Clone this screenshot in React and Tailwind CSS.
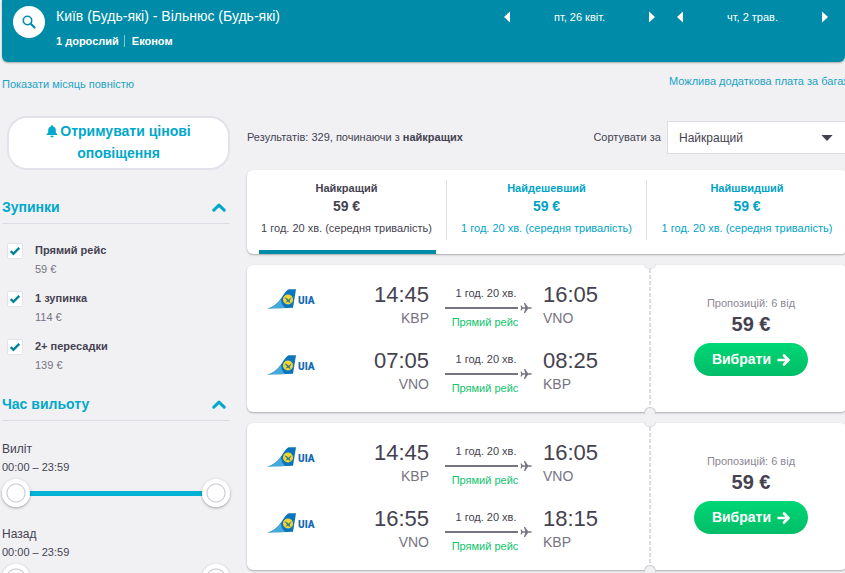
import React from "react";

const tabs = [
  { name: "Найкращий", active: true },
  { name: "Найдешевший", active: false },
  { name: "Найшвидший", active: false },
];

const stops = [
  { id: "direct", label: "Прямий рейс", price: "59 €" },
  { id: "one", label: "1 зупинка", price: "114 €" },
  { id: "two", label: "2+ пересадки", price: "139 €" },
];

const flights = [
  [
    { dep: "14:45", from: "KBP", arr: "16:05", to: "VNO" },
    { dep: "07:05", from: "VNO", arr: "08:25", to: "KBP" },
  ],
  [
    { dep: "14:45", from: "KBP", arr: "16:05", to: "VNO" },
    { dep: "16:55", from: "VNO", arr: "18:15", to: "KBP" },
  ],
];

function DateNav({ label }) {
  return (
    <div className="flex w-[151px] items-center justify-between text-[11px] leading-4">
      <button type="button" aria-label="Попередній день">
        <svg width="6" height="12" viewBox="0 0 6 12" fill="currentColor">
          <path d="M6 0.5v11L0 6z" />
        </svg>
      </button>
      <span>{label}</span>
      <button type="button" aria-label="Наступний день">
        <svg width="6" height="12" viewBox="0 0 6 12" fill="currentColor">
          <path d="M0 0.5v11L6 6z" />
        </svg>
      </button>
    </div>
  );
}

function Header() {
  return (
    <header className="flex h-[62px] items-start justify-between rounded-b-md bg-[#008ca8] pr-[17px] pl-[11px] text-white shadow-[0_1px_2px_rgba(0,0,0,0.3)]">
      <div className="flex gap-[11px] pt-1.5">
        <button
          type="button"
          aria-label="Пошук"
          className="flex size-8 shrink-0 items-center justify-center rounded-full bg-white text-[#008ca8]"
        >
          <svg width="14" height="14" viewBox="0 0 14 14" fill="none" stroke="currentColor">
            <circle cx="5.5" cy="5.5" r="4.2" strokeWidth="1.6" />
            <path d="M8.8 8.800l3.700 3.700" strokeWidth="2.2" strokeLinecap="round" />
          </svg>
        </button>
        <div>
          <h1 className="text-[14px] leading-5">Київ (Будь-які) - Вільнюс (Будь-які)</h1>
          <p className="mt-[9px] flex text-[11px] leading-3 font-bold">
            <span className="border-r border-white/50 pr-[5px]">1 дорослий</span>
            <span className="pl-[7px]">Економ</span>
          </p>
        </div>
      </div>
      <div className="flex gap-[22px] pt-[9px]">
        <DateNav label="пт, 26 квіт." />
        <DateNav label="чт, 2 трав." />
      </div>
    </header>
  );
}

function FilterHeading({ children }) {
  return (
    <h2 className="border-b border-[#dddde5] text-[14px] font-bold text-[#00a8cc]">
      <button type="button" className="flex h-8 w-full items-center justify-between pr-1">
        {children}
        <svg width="14" height="9" viewBox="0 0 14 9" fill="none" stroke="currentColor" strokeWidth="3" strokeLinecap="round" strokeLinejoin="round">
          <path d="M1.8 7.2L7 2.2l5.2 5" />
        </svg>
      </button>
    </h2>
  );
}

const thumb =
  "pointer-events-none absolute inset-0 h-7 w-full appearance-none bg-transparent [&::-webkit-slider-thumb]:pointer-events-auto [&::-webkit-slider-thumb]:size-7 [&::-webkit-slider-thumb]:appearance-none [&::-webkit-slider-thumb]:rounded-full [&::-webkit-slider-thumb]:bg-[radial-gradient(circle,#fff_8px,#c4c4cc_9px,#fff_10px)] [&::-webkit-slider-thumb]:shadow-[0_1px_3px_rgba(0,0,0,0.35)]";

function TimeRange({ title }) {
  return (
    <fieldset className="h-[85px]">
      <legend className="text-[12px] leading-[18px] font-medium">{title}</legend>
      <p className="text-[11px] leading-[18px]">00:00 – 23:59</p>
      <div className="relative mt-[3px] flex h-7 items-center">
        <div className="h-[5px] w-full rounded-full bg-[#00b2d6]" />
        <input type="range" min="0" max="1439" defaultValue="0" aria-label={title + " від"} className={thumb} />
        <input type="range" min="0" max="1439" defaultValue="1439" aria-label={title + " до"} className={thumb} />
      </div>
    </fieldset>
  );
}

function Sidebar() {
  return (
    <aside className="w-[228px] shrink-0">
      <button
        type="button"
        className="ml-[5px] block h-[54px] w-[223px] rounded-[20px] border-2 border-[#e2e2ea] bg-white pb-0.5 text-center text-[14px] leading-[22px] font-bold text-[#00a8cc]"
      >
        <svg width="12" height="13" viewBox="0 0 12 13" fill="currentColor" className="mr-0.5 inline-block align-[-2px]">
          <path d="M6 0.3c.7 0 1.1.5 1.1 1.1C9 1.900 9.800 3.300 9.800 5v2.500L11.300 9.200v.8H.7v-.8L2.200 7.500V5c0-1.700.8-3.100 2.700-3.600C4.900.8 5.300.3 6 .3zM4.400 10.800h3.200C7.600 11.800 6.900 12.500 6 12.500s-1.600-.7-1.600-1.700z" />
        </svg>
        Отримувати цінові
        <br />
        оповіщення
      </button>

      <section className="mt-[21px]">
        <FilterHeading>Зупинки</FilterHeading>
        <ul className="pt-[17px]">
          {stops.map((s) => (
            <li key={s.id} className="flex h-12 pl-[5px]">
              <span className="relative mt-0.5 size-4 shrink-0">
                <input
                  id={s.id}
                  type="checkbox"
                  defaultChecked
                  className="peer block size-4 appearance-none rounded-xs border border-[#e2e2ea] bg-white"
                />
                <svg width="16" height="16" viewBox="0 0 16 16" fill="none" stroke="#00849c" strokeWidth="2.4" className="pointer-events-none absolute inset-0 hidden peer-checked:block">
                  <path d="M3.800 8.200l2.600 2.600 5.800-6" />
                </svg>
              </span>
              <label htmlFor={s.id} className="pl-3 text-[11px] leading-[19px]">
                <span className="block font-bold">{s.label}</span>
                <span className="block text-[#777482]">{s.price}</span>
              </label>
            </li>
          ))}
        </ul>
      </section>

      <section className="mt-[3px]">
        <FilterHeading>Час вильоту</FilterHeading>
        <div className="pt-[19px]">
          <TimeRange title="Виліт" />
          <TimeRange title="Назад" />
        </div>
      </section>
    </aside>
  );
}

function AirlineLogo() {
  return (
    <svg width="50" height="20" viewBox="0 0 50 20" role="img" aria-label="UIA">
      <path d="M0 19.500C6 18.200 10 15 14 9.500C18 3.500 20 .6 22 .2h7L26 18.800C17 19.300 9 19.300 0 19.500z" fill="#0b74bd" />
      <path d="M0 19.500C6 18.200 10 15 14 9.500C14 13 15 16 18 19.100C12 19.300 6 19.300 0 19.500z" fill="#45a9da" />
      <circle cx="21" cy="10.500" r="5" fill="#f3d433" />
      <path d="M17.500 8.500c2 .4 3.200 1 4 2.200l3-2.400-1.800 3.800 1 2.500-2.600-1.800-2.500.7 1.400-2z" fill="#3a7f83" />
      <text x="31" y="15" fontFamily="Roboto, sans-serif" fontSize="10" fontWeight="900" fill="#126cb5">UIA</text>
    </svg>
  );
}

function Leg({ leg }) {
  return (
    <div className="flex h-[66px] pl-5">
      <div className="w-[50px] pt-2">
        <AirlineLogo />
      </div>
      <div className="w-28 text-right">
        <p className="text-[22px] leading-7">{leg.dep}</p>
        <p className="text-[14px] leading-[18px] text-[#777482]">{leg.from}</p>
      </div>
      <div className="mr-2.5 ml-4 w-[88px] text-[11px] leading-4">
        <p className="mt-1 pr-1.5 text-center">1 год. 20 хв.</p>
        <div className="mt-px flex h-3 items-center gap-0.5 text-[#777482]">
          <span className="h-0.5 w-[73px] bg-current" />
          <svg width="12" height="12" viewBox="0 0 12 12" fill="currentColor">
            <path d="M0.500 3.500h1.100l1.100 1.800h2.600L3.900 1h1.200L8 5.300h2.500c.8 0 1.300.3 1.300.7s-.5.7-1.300.7H8L5.100 11H3.900l1.400-4.300H2.700L1.600 8.500H.5L1.200 6z" />
          </svg>
        </div>
        <p className="pr-2 text-center text-[#0fc46c]">Прямий рейс</p>
      </div>
      <div>
        <p className="text-[22px] leading-7">{leg.arr}</p>
        <p className="text-[14px] leading-[18px] text-[#777482]">{leg.to}</p>
      </div>
    </div>
  );
}

function FlightCard({ legs }) {
  return (
    <article className="flex h-[147px] rounded-md bg-white shadow-[0_1px_2px_rgba(0,0,0,0.3)]">
      <div className="flex-1 pt-4">
        {legs.map((leg, i) => (
          <Leg key={i} leg={leg} />
        ))}
      </div>
      <div className="relative flex w-[198px] flex-col items-center pt-[29px] pl-1.5">
        <span className="absolute inset-y-1 left-0 w-0.5 bg-[repeating-linear-gradient(to_bottom,#dcdce3_0_4px,transparent_4px_6px)]" />
        <span className="absolute -top-px -left-[5px] h-[5px] w-3 rounded-b-full border border-t-0 border-[#dddde3] bg-[#f1f1f4]" />
        <span className="absolute -bottom-0.5 -left-[5px] h-[7px] w-3 rounded-t-full border border-b-0 border-[#c9c9d0] bg-[#f1f1f4]" />
        <p className="text-[11px] leading-[18px] text-[#8b8894]">Пропозицій: 6 від</p>
        <p className="text-[20px] leading-6 font-bold">59 €</p>
        <button
          type="button"
          className="mt-[7px] flex h-[33px] w-[114px] items-center justify-center gap-1.5 rounded-full bg-linear-to-b from-[#00d775] to-[#00bd68] text-[14px] font-bold text-white"
        >
          Вибрати
          <svg width="13" height="12" viewBox="0 0 13 12" fill="none" stroke="currentColor" strokeWidth="2.6" strokeLinecap="round" strokeLinejoin="round">
            <path d="M1.500 6h10M7 1.500L11.500 6 7 10.500" />
          </svg>
        </button>
      </div>
    </article>
  );
}

export default function App() {
  return (
    <div className="min-h-screen overflow-x-hidden bg-[#f1f1f4] pl-0.5 font-['Liberation_Sans',Arial,sans-serif] text-[#444250]">
      <Header />
      <div className="flex h-[54px] items-start justify-between pt-[11px] text-[11px] leading-4 text-[#1aa3c4]">
        <a href="#month" className="pt-[3px]">Показати місяць повністю</a>
        <a href="#baggage" className="w-44 shrink-0 whitespace-nowrap">Можлива додаткова плата за багаж</a>
      </div>
      <div className="flex gap-[17px]">
        <Sidebar />
        <main className="-mr-0.5 min-w-0 flex-1 pt-[5px]">
          <div className="flex h-[33px] items-center justify-between text-[11px]">
            <p>
              Результатів: 329, починаючи з <b>найкращих</b>
            </p>
            <div className="flex items-center gap-1.5">
              <label htmlFor="sort">Сортувати за</label>
              <div className="relative">
                <select id="sort" className="h-[33px] w-[180px] appearance-none border border-[#dddde5] bg-white pl-[11px] text-[12px]">
                  <option>Найкращий</option>
                  <option>Найдешевший</option>
                  <option>Найшвидший</option>
                </select>
                <svg width="12" height="6" viewBox="0 0 12 6" fill="currentColor" className="pointer-events-none absolute top-[14px] right-[14px]">
                  <path d="M.4 0h11.200L6 6z" />
                </svg>
              </div>
            </div>
          </div>

          <div role="tablist" className="mt-4 grid h-[84px] grid-cols-3 rounded-md bg-white pt-[10px] shadow-[0_1px_2px_rgba(0,0,0,0.3)]">
            {tabs.map((t) => (
              <button
                key={t.name}
                type="button"
                role="tab"
                aria-selected={t.active}
                className={
                  "flex flex-col items-center text-[11px] " +
                  (t.active ? "text-[#444250]" : "text-[#00a3c7]")
                }
              >
                <span className={"flex h-[60px] w-full flex-col items-center " + (t.name === "Найшвидший" ? "" : "border-r border-[#dddde5]")}>
                  <span className="leading-4 font-bold">{t.name}</span>
                  <span className="text-[14px] leading-5 font-bold">59 €</span>
                  <span className="mt-1 leading-4 whitespace-nowrap">1 год. 20 хв. (середня тривалість)</span>
                </span>
                {t.active && <span className="mt-[10px] h-1 w-[177px] bg-[#008ca8]" />}
              </button>
            ))}
          </div>

          <div className="mt-[11px] flex flex-col gap-[11px]">
            {flights.map((legs, i) => (
              <FlightCard key={i} legs={legs} />
            ))}
          </div>
        </main>
      </div>
    </div>
  );
}
